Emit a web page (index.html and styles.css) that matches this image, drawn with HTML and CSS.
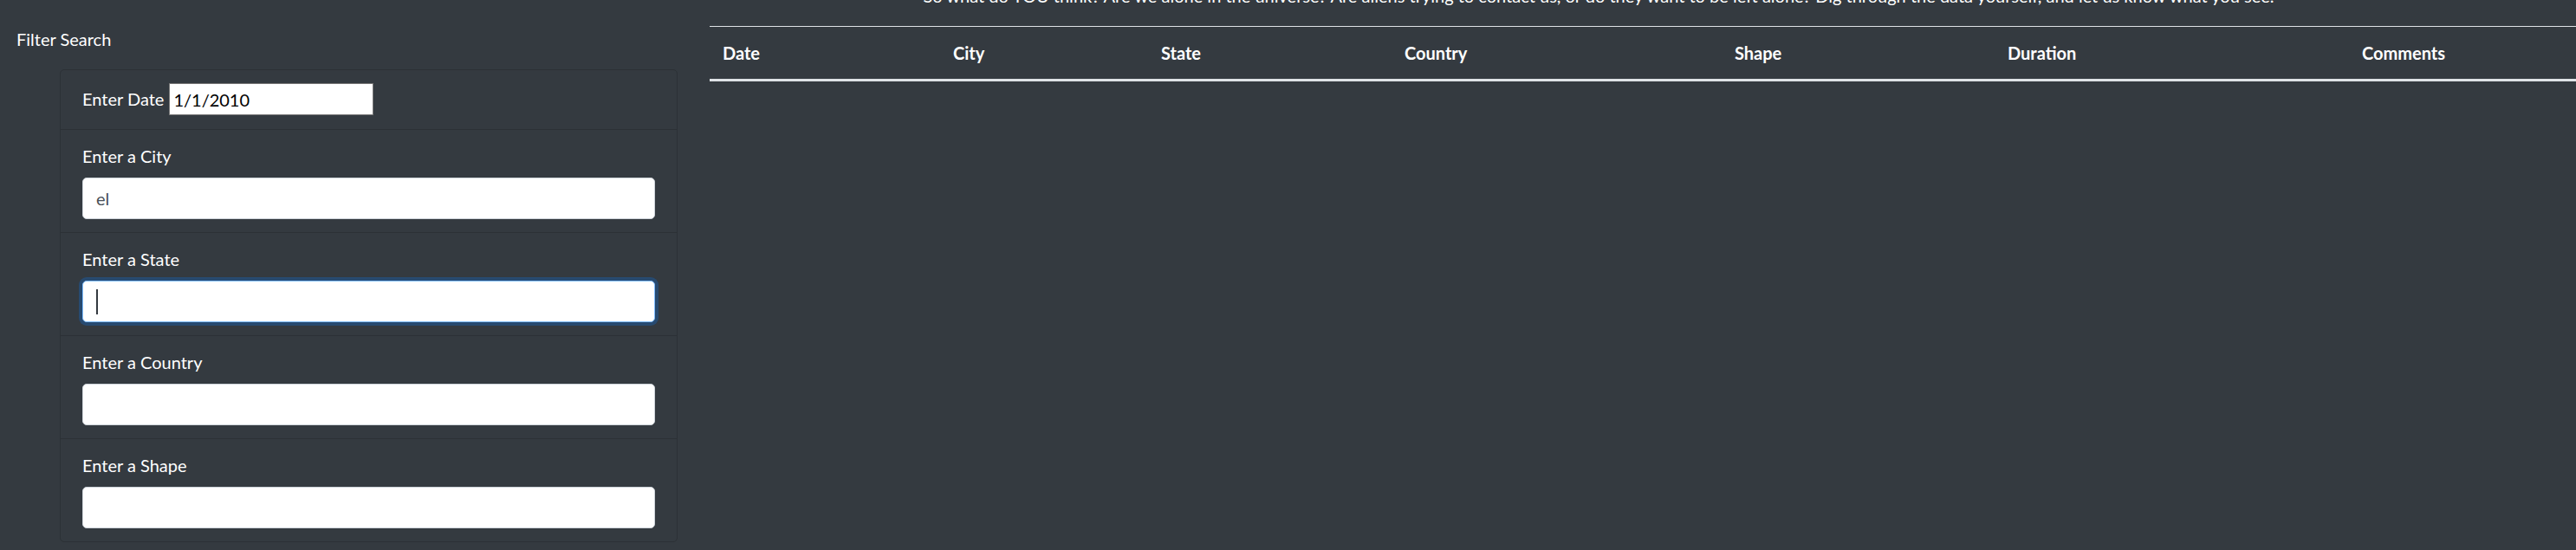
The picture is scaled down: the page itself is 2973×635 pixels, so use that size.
FILE: index.html
```html
<!DOCTYPE html>
<html lang="en">
<head>
<meta charset="utf-8">
<title>UFO Sightings</title>
<link rel="stylesheet" href="styles.css">
</head>
<body>
<div class="page">
  <aside class="sidebar">
    <div class="filter-title">Filter Search</div>
    <ul class="filters">
      <li class="filter filter-date">
        <label class="filter-label-inline" for="datetime">Enter Date</label>
        <input class="date-input" id="datetime" type="text" value="1/1/2010">
      </li>
      <li class="filter">
        <label class="filter-label" for="city">Enter a City</label>
        <input class="form-control" id="city" type="text" value="el">
      </li>
      <li class="filter">
        <label class="filter-label" for="state">Enter a State</label>
        <div class="field">
          <input class="form-control is-focused" id="state" type="text">
          <span class="caret"></span>
        </div>
      </li>
      <li class="filter">
        <label class="filter-label" for="country">Enter a Country</label>
        <input class="form-control" id="country" type="text">
      </li>
      <li class="filter">
        <label class="filter-label" for="shape">Enter a Shape</label>
        <input class="form-control" id="shape" type="text">
      </li>
    </ul>
  </aside>
  <main class="content">
    <p class="intro">So what do YOU think? Are we alone in the universe? Are aliens trying to contact us, or do they want to be left alone? Dig through the data yourself, and let us know what you see.</p>
    <table class="ufo-table">
      <thead>
        <tr>
          <th class="col-date">Date</th>
          <th class="col-city">City</th>
          <th class="col-state">State</th>
          <th class="col-country">Country</th>
          <th class="col-shape">Shape</th>
          <th class="col-duration">Duration</th>
          <th class="col-comments">Comments</th>
        </tr>
      </thead>
      <tbody></tbody>
    </table>
  </main>
</div>
</body>
</html>
```
FILE: styles.css
```css
html, body {
  margin: 0;
  padding: 0;
  background: #343a40;
  overflow: hidden;
}

body {
  font-family: Lato, "Open Sans", "Noto Sans", sans-serif;
  font-size: 20px;
  line-height: 30px;
  color: #ffffff;
  height: 635px;
}

.page {
  display: flex;
  align-items: flex-start;
}

.sidebar {
  flex: 0 0 800px;
  box-sizing: border-box;
  padding: 30px 0 0 19px;
}

.filter-title {
  height: 30px;
  line-height: 30px;
}

.filters {
  list-style: none;
  margin: 20px 0 0 50px;
  padding: 0;
  width: 711px;
  border: 1px solid #2c3136;
  border-radius: 5px;
}

.filter {
  padding: 15px 25px;
  border-top: 1px solid #2c3136;
}

.filter:first-child {
  border-top: 0;
}

.filter-date {
  display: flex;
  align-items: flex-start;
  gap: 6px;
  padding: 15px 25px 16px;
}

.filter-label-inline {
  line-height: 37px;
  height: 37px;
}

.date-input {
  box-sizing: border-box;
  width: 236px;
  height: 37px;
  margin: 0;
  padding: 1px 4px;
  border: 1px solid #767676;
  background: #ffffff;
  color: #000000;
  font-family: inherit;
  font-size: 20px;
  line-height: 33px;
}

.filter-label {
  display: block;
  margin-bottom: 10px;
  line-height: 30px;
}

.field {
  position: relative;
}

.form-control {
  display: block;
  box-sizing: border-box;
  width: 100%;
  height: 48px;
  margin: 0;
  padding: 7px 15px;
  border: 1px solid #ced4da;
  border-radius: 5px;
  background: #ffffff;
  color: #495057;
  font-family: inherit;
  font-size: 20px;
  line-height: 30px;
  outline: none;
}

.form-control.is-focused {
  border-color: #80bdff;
  box-shadow: 0 0 0 4px rgba(0, 123, 255, 0.25);
}

.caret {
  position: absolute;
  left: 16px;
  top: 10px;
  width: 2px;
  height: 29px;
  background: #343a40;
}

.content {
  flex: 1 1 0;
  min-width: 0;
  box-sizing: border-box;
  padding-left: 19px;
}

.intro {
  margin: -20px 0 20px;
  padding-right: 102px;
  text-align: center;
  line-height: 30px;
}

.ufo-table {
  width: 100%;
  table-layout: fixed;
  border-collapse: collapse;
}

.ufo-table th {
  box-sizing: border-box;
  padding: 15px;
  text-align: left;
  font-weight: 700;
  line-height: 30px;
  color: #ffffff;
  border-top: 1px solid #dee2e6;
  border-bottom: 3px solid #dee2e6;
}

.col-date { width: 266px; }
.col-city { width: 240px; }
.col-state { width: 281px; }
.col-country { width: 381px; }
.col-shape { width: 315px; }
.col-duration { width: 409px; }
.col-comments { width: 262px; }
```
